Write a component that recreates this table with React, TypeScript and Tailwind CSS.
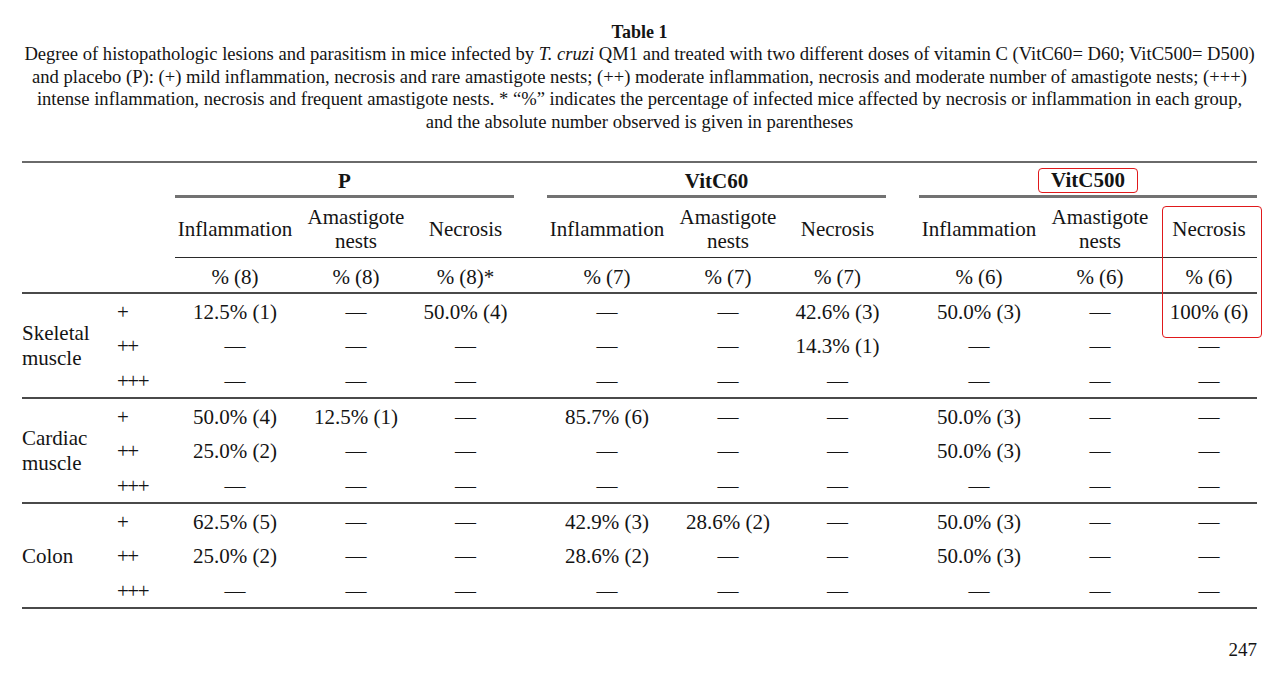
import React from 'react';

const cols =
  'grid grid-cols-[95px_58px_120px_122px_97px_33px_120px_122px_97px_33px_120px_122px_96px]';

const D = '—';

const groups = [
  { name: 'P', n: '8', star: true },
  { name: 'VitC60', n: '7', star: false },
  { name: 'VitC500', n: '6', star: false },
];

const sections = [
  {
    tissue: ['Skeletal', 'muscle'],
    rows: [
      ['12.5% (1)', D, '50.0% (4)', D, D, '42.6% (3)', '50.0% (3)', D, '100% (6)'],
      [D, D, D, D, D, '14.3% (1)', D, D, D],
      [D, D, D, D, D, D, D, D, D],
    ],
  },
  {
    tissue: ['Cardiac', 'muscle'],
    rows: [
      ['50.0% (4)', '12.5% (1)', D, '85.7% (6)', D, D, '50.0% (3)', D, D],
      ['25.0% (2)', D, D, D, D, D, '50.0% (3)', D, D],
      [D, D, D, D, D, D, D, D, D],
    ],
  },
  {
    tissue: ['Colon'],
    rows: [
      ['62.5% (5)', D, D, '42.9% (3)', '28.6% (2)', D, '50.0% (3)', D, D],
      ['25.0% (2)', D, D, '28.6% (2)', D, D, '50.0% (3)', D, D],
      [D, D, D, D, D, D, D, D, D],
    ],
  },
];

const grades = ['+', '++', '+++'];

// put the empty spacer columns between the three groups
const withGaps = (cells: React.ReactNode[]) => [
  ...cells.slice(0, 3),
  null,
  ...cells.slice(3, 6),
  null,
  ...cells.slice(6, 9),
];

const App: React.FC = () => {
  return (
    <div className="min-h-[674px] bg-white px-[22px] pt-[21px] font-['Liberation_Serif','Times_New_Roman',serif] text-[#141414]">
      <div className="w-[1235px]">
        {/* Caption */}
        <h1 className="text-center text-[18px] font-bold leading-[22px]">Table 1</h1>
        <p className="whitespace-nowrap text-center text-[18.6px] leading-[22.7px]">
          Degree of histopathologic lesions and parasitism in mice infected by <i>T. cruzi</i> QM1 and treated with two
          different doses of vitamin C (VitC60= D60; VitC500= D500)
          <br />
          and placebo (P): (+) mild inflammation, necrosis and rare amastigote nests; (++) moderate inflammation, necrosis
          and moderate number of amastigote nests; (+++)
          <br />
          intense inflammation, necrosis and frequent amastigote nests. * “%” indicates the percentage of infected mice
          affected by necrosis or inflammation in each group,
          <br />
          and the absolute number observed is given in parentheses
        </p>

        {/* Table */}
        <div className="relative mt-[27px] border-t-2 border-[#6a6a6a] text-[21px]">
          {/* Group header */}
          <div className={cols}>
            <div className="col-span-2" />
            {groups.map((g, i) => (
              <React.Fragment key={g.name}>
                <div className="col-span-3 flex h-[35px] justify-center border-b-[3px] border-[#727272] pt-[5px] font-bold">
                  {g.name === 'VitC500' ? (
                    <span className="inline-block h-[25px] rounded-[4px] border border-[#e0191b] px-[12px] leading-[23px]">
                      {g.name}
                    </span>
                  ) : (
                    <span className="pt-[1px] leading-[24px]">{g.name}</span>
                  )}
                </div>
                {i < 2 && <div />}
              </React.Fragment>
            ))}
          </div>

          {/* Sub header */}
          <div className={cols}>
            <div className="col-span-2" />
            {withGaps(groups.flatMap(() => ['Inflammation', 'Amastigote nests', 'Necrosis'])).map((label, i) => (
              <div
                key={i}
                className="flex h-[60px] items-center justify-center border-b border-[#2a2a2a] pt-[3px] text-center leading-[24px]"
              >
                {label === 'Amastigote nests' ? (
                  <span>
                    Amastigote
                    <br />
                    nests
                  </span>
                ) : (
                  label
                )}
              </div>
            ))}
          </div>

          {/* Sample sizes */}
          <div className={`${cols} border-b-2 border-[#4a4a4a]`}>
            <div className="col-span-2" />
            {withGaps(groups.flatMap((g) => [`% (${g.n})`, `% (${g.n})`, `% (${g.n})${g.star ? '*' : ''}`])).map(
              (t, i) => (
                <div key={i} className="flex h-[34px] items-center justify-center pt-[4px] leading-[24px]">
                  {t}
                </div>
              )
            )}
          </div>

          {/* Body */}
          {sections.map((s) => (
            <div key={s.tissue[0]} className={`${cols} h-[105px] grid-rows-3 border-b-2 border-[#4a4a4a]`}>
              <div className="row-span-3 flex flex-col justify-center pt-[2px] leading-[25px]">
                {s.tissue.map((t) => (
                  <span key={t}>{t}</span>
                ))}
              </div>
              {s.rows.map((r, ri) => (
                <React.Fragment key={ri}>
                  <div className="col-start-2 flex items-center pt-[2px] leading-[24px] tracking-[-1.5px]">
                    {grades[ri]}
                  </div>
                  {withGaps(r).map((v, ci) => (
                    <div key={ci} className="flex items-center justify-center pt-[2px] leading-[24px]">
                      {v}
                    </div>
                  ))}
                </React.Fragment>
              ))}
            </div>
          ))}

          {/* highlight on the VitC500 necrosis column */}
          <div className="pointer-events-none absolute left-[1140px] top-[43px] h-[132px] w-[100px] rounded-[4px] border border-[#e0191b]" />
        </div>

        <p className="mt-[30px] text-right text-[19px] leading-[22px]">247</p>
      </div>
    </div>
  );
};

export default App;
